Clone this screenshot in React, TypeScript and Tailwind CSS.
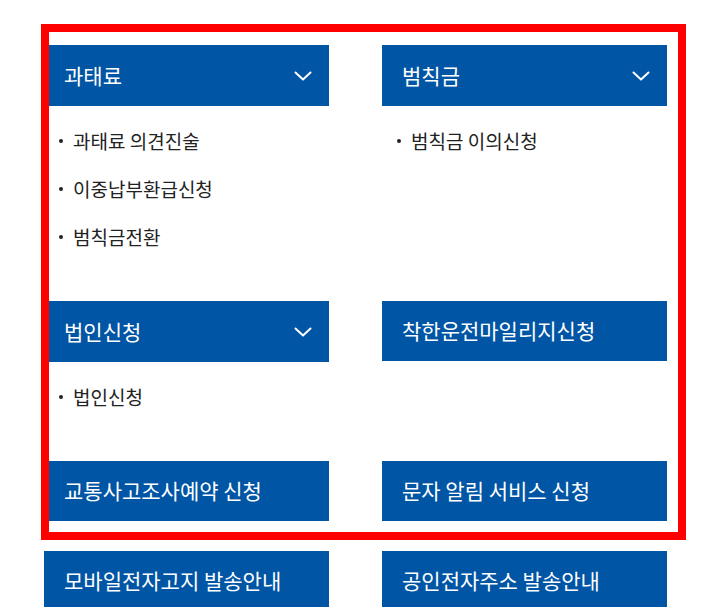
const blue = "bg-[#0055a5]";

type Section = {
    title: string;
    items?: string[];
    accordion?: boolean;
};

const sections: Section[] = [
    { title: "과태료", accordion: true, items: ["과태료 의견진술", "이중납부환급신청", "범칙금전환"] },
    { title: "범칙금", accordion: true, items: ["범칙금 이의신청"] },
    { title: "법인신청", accordion: true, items: ["법인신청"] },
    { title: "착한운전마일리지신청" },
    { title: "교통사고조사예약 신청" },
    { title: "문자 알림 서비스 신청" },
    { title: "모바일전자고지 발송안내" },
    { title: "공인전자주소 발송안내" },
];

function Chevron() {
    return (
        <svg width="18" height="10" viewBox="0 0 18 10" fill="none" className="shrink-0">
            <polyline points="1.5,1.5 9,8.5 16.5,1.5" stroke="white" strokeWidth="2" strokeLinecap="round" strokeLinejoin="round" />
        </svg>
    );
}

function Card({ section }: { section: Section }) {
    return (
        <div>
            <div
                className={`${blue} flex items-center justify-between pl-5 pr-[17px] text-white text-[21px] ${
                    section.accordion ? "h-[61px]" : "h-[60px]"
                }`}
            >
                <span>{section.title}</span>
                {section.accordion && <Chevron />}
            </div>
            {section.items && (
                <ul className="pt-[23px] pb-[22px] pl-[15px] space-y-6">
                    {section.items.map((item) => (
                        <li key={item} className="flex items-center h-6 text-[19px] text-[#222]">
                            <span className="w-[4px] h-[4px] rounded-full bg-[#222] mr-[10px]" />
                            <span>{item}</span>
                        </li>
                    ))}
                </ul>
            )}
        </div>
    );
}

export default function App() {
    return (
        <div
            className="relative w-[708px] h-[607px] overflow-hidden bg-white"
            style={{ fontFamily: '"Noto Sans CJK KR", "Noto Sans", sans-serif' }}
        >
            <div className="grid grid-cols-[285px_285px] gap-x-[53px] gap-y-[30px] pl-[44px] pt-[45px]">
                {sections.map((s) => (
                    <Card key={s.title} section={s} />
                ))}
            </div>

            {/* highlight frame */}
            <div className="absolute left-[41px] top-[24px] w-[645px] h-[516px] border-8 border-[#ff0000] pointer-events-none" />
        </div>
    );
}
